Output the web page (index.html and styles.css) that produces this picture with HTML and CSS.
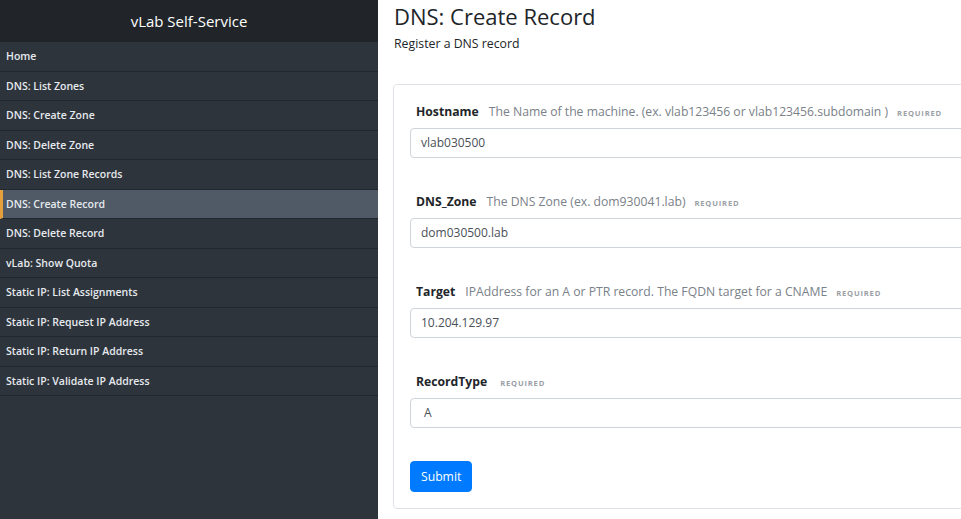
FILE: index.html
```html
<!DOCTYPE html>
<html>
<head>
<meta charset="utf-8">
<link rel="stylesheet" href="styles.css">
</head>
<body>
<aside class="sidebar">
  <div class="brand">vLab Self-Service</div>
  <nav class="nav">
    <a class="nav-item">Home</a>
    <a class="nav-item">DNS: List Zones</a>
    <a class="nav-item">DNS: Create Zone</a>
    <a class="nav-item">DNS: Delete Zone</a>
    <a class="nav-item">DNS: List Zone Records</a>
    <a class="nav-item active">DNS: Create Record</a>
    <a class="nav-item">DNS: Delete Record</a>
    <a class="nav-item">vLab: Show Quota</a>
    <a class="nav-item">Static IP: List Assignments</a>
    <a class="nav-item">Static IP: Request IP Address</a>
    <a class="nav-item">Static IP: Return IP Address</a>
    <a class="nav-item">Static IP: Validate IP Address</a>
  </nav>
</aside>
<main class="main">
  <h1 class="title">DNS: Create Record</h1>
  <p class="subtitle">Register a DNS record</p>
  <form class="card">
    <div class="field">
      <label class="label"><b>Hostname</b><span class="desc">The Name of the machine. (ex. vlab123456 or vlab123456.subdomain )</span><span class="req">REQUIRED</span></label>
      <div class="input">vlab030500</div>
    </div>
    <div class="field">
      <label class="label"><b>DNS_Zone</b><span class="desc">The DNS Zone (ex. dom930041.lab)</span><span class="req">REQUIRED</span></label>
      <div class="input">dom030500.lab</div>
    </div>
    <div class="field">
      <label class="label"><b>Target</b><span class="desc">IPAddress for an A or PTR record. The FQDN target for a CNAME</span><span class="req">REQUIRED</span></label>
      <div class="input">10.204.129.97</div>
    </div>
    <div class="field">
      <label class="label"><b>RecordType</b><span class="desc empty"></span><span class="req">REQUIRED</span></label>
      <div class="input select">A</div>
    </div>
    <button class="btn" type="button">Submit</button>
  </form>
</main>
</body>
</html>
```
FILE: styles.css
```css
html, body {
  margin: 0;
  padding: 0;
  height: 519px;
  overflow: hidden;
}
body {
  display: flex;
  font-family: "Open Sans", "Noto Sans", sans-serif;
  background: #fff;
  color: #212529;
}
.sidebar {
  width: 378px;
  flex-shrink: 0;
  background: #2e343c;
  height: 519px;
}
.brand {
  height: 42px;
  background: #212529;
  color: #fff;
  font-size: 15px;
  line-height: 42px;
  text-align: center;
}
.nav {
  display: flex;
  flex-direction: column;
}
.nav-item {
  height: 28.5px;
  line-height: 28.5px;
  border-bottom: 1px solid #22272d;
  color: #e6eaee;
  font-size: 10.5px;
  font-weight: 600;
  padding-left: 6px;
  white-space: nowrap;
}
.nav-item.active {
  background: #4f5a66;
  border-left: 3px solid #e5a03c;
  padding-left: 3px;
}
.main {
  padding-left: 16px;
  flex-shrink: 0;
}
.title {
  margin: 0;
  font-size: 22px;
  font-weight: 500;
  line-height: 32px;
  color: #212529;
}
.subtitle {
  margin: 2px 0 0;
  font-size: 12.3px;
  line-height: 20px;
  color: #212529;
}
.card {
  margin: 30px 0 0 -1px;
  width: 640px;
  border: 1px solid #dfe3e7;
  border-radius: 4px;
  padding: 16px 16px 16px 16px;
}
.field {
  margin-bottom: 33px;
}
.label {
  display: flex;
  align-items: baseline;
  height: 20px;
  line-height: 20px;
  padding: 1px 0 0 6px;
  margin-bottom: 6px;
  font-size: 12.2px;
  white-space: nowrap;
}
.label b {
  font-weight: 700;
  color: #212529;
}
.desc {
  color: #7a8189;
  margin-left: 10px;
}
.desc.empty {
  margin-left: 4px;
}
.req {
  margin-left: 9px;
  font-size: 7.6px;
  font-weight: 700;
  letter-spacing: 0.8px;
  color: #9aa0a6;
}
.input {
  height: 28px;
  line-height: 28px;
  border: 1px solid #ced4da;
  border-radius: 4px;
  padding-left: 10px;
  font-size: 12px;
  color: #495057;
}
.select {
  padding-left: 13px;
}
.btn {
  display: block;
  height: 31px;
  padding: 0 10px;
  background: #007bff;
  color: #fff;
  border: 1px solid #007bff;
  border-radius: 4px;
  font-family: inherit;
  font-size: 12.2px;
}
```
